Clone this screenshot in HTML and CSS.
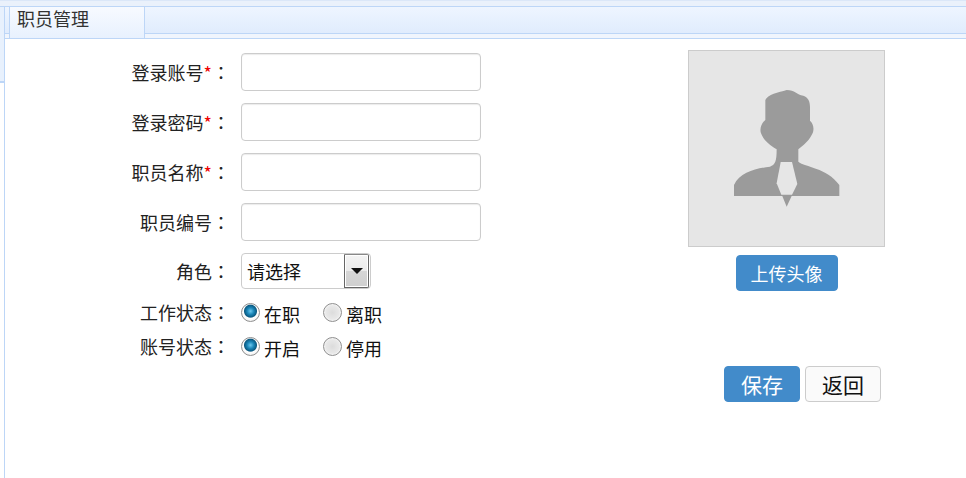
FILE: index.html
```html
<!DOCTYPE html>
<html lang="zh-CN">
<head>
<meta charset="utf-8">
<title>职员管理</title>
<link rel="stylesheet" href="styles.css">
</head>
<body>
<div class="topstrip"></div>
<div class="shell">
  <aside class="rail"><div class="rail-top"></div></aside>
  <main class="main">
    <nav class="tabbar"><div class="tab">职员管理</div></nav>
    <div class="content">
      <form class="form">
        <div class="row row-input"><label class="label">登录账号<em class="req">*</em><span class="colon" lang="zh-TW">：</span></label><input class="input" type="text"></div>
        <div class="row row-input"><label class="label">登录密码<em class="req">*</em><span class="colon" lang="zh-TW">：</span></label><input class="input" type="password"></div>
        <div class="row row-input"><label class="label">职员名称<em class="req">*</em><span class="colon" lang="zh-TW">：</span></label><input class="input" type="text"></div>
        <div class="row row-input"><label class="label">职员编号<span class="colon" lang="zh-TW">：</span></label><input class="input" type="text"></div>
        <div class="row row-select"><label class="label">角色<span class="colon" lang="zh-TW">：</span></label>
          <div class="select"><span class="select-text">请选择</span><span class="select-btn"><i class="caret"></i></span></div>
        </div>
        <div class="row row-radio work"><span class="label">工作状态<span class="colon" lang="zh-TW">：</span></span>
          <label class="radio"><input type="radio" name="work" checked><span class="radio-text">在职</span></label>
          <label class="radio"><input type="radio" name="work"><span class="radio-text">离职</span></label>
        </div>
        <div class="row row-radio acct"><span class="label">账号状态<span class="colon" lang="zh-TW">：</span></span>
          <label class="radio"><input type="radio" name="acct" checked><span class="radio-text">开启</span></label>
          <label class="radio"><input type="radio" name="acct"><span class="radio-text">停用</span></label>
        </div>
      </form>
      <section class="side">
        <div class="avatar-col">
          <div class="photo">
            <svg class="silhouette" viewBox="27 33 585 585" aria-hidden="true">
              <path fill="#9b9b9b" d="M256 180C262 164 296 157 320 150C345 150 350 165 370 167C385 172 390 185 390 200L390 242C400 250 405 270 395 285C385 305 370 315 355 328L355 365C375 382 440 382 478 435L478 468L162 468L162 435C180 395 230 385 270 380C285 375 290 365 290 328C270 315 250 300 243 280C238 265 245 248 256 240Z"/>
              <path fill="#e6e6e6" d="M302 366L336 366L352 432L336 464L304 464L290 430Z"/>
              <path fill="#9b9b9b" d="M306 466L336 466L320 500Z"/>
            </svg>
          </div>
          <button class="btn btn-primary btn-upload" type="button">上传头像</button>
        </div>
        <div class="actions">
          <button class="btn btn-primary btn-large" type="button">保存</button>
          <button class="btn btn-default btn-large" type="button">返回</button>
        </div>
      </section>
    </div>
  </main>
</div>
</body>
</html>
```
FILE: styles.css
```css
* { box-sizing: border-box; }
html, body { margin: 0; height: 100%; }
body {
  font-family: "Noto Sans CJK SC", "Liberation Sans", sans-serif;
  font-size: 18px;
  color: #222;
  background: #fff;
  overflow: hidden;
  display: flex;
  flex-direction: column;
}
.topstrip {
  height: 7px;
  flex: none;
  background: #eaf1fb;
  border-top: 1px solid #dbe7f8;
  border-bottom: 1px solid #bdd6f7;
}
.shell { flex: 1; display: flex; min-height: 0; }
.rail {
  width: 5px;
  flex: none;
  border-right: 1px solid #bdd6f7;
}
.rail-top {
  height: 76px;
  background: #e8f1fd;
  border-bottom: 2px solid #bdd6f7;
}
.main { flex: 1; min-width: 0; display: flex; flex-direction: column; }
.tabbar {
  height: 32px;
  flex: none;
  padding-left: 4px;
  background: linear-gradient(#eef5ff, #e0ecfd 26px, #bdd6f7 26px, #bdd6f7 27px, #f0f5fd 27px, #f0f5fd 31px);
  border-bottom: 1px solid #bdd6f7;
  display: flex;
}
.tab {
  width: 136px;
  height: 31px;
  padding-left: 7px;
  line-height: 23px;
  color: #333;
  background: linear-gradient(#f7faff, #e8f1fe);
  border-left: 1px solid #bdd6f7;
  border-right: 1px solid #bdd6f7;
}
.content { flex: 1; display: flex; min-height: 0; }
.form {
  width: 489px;
  flex: none;
  padding-top: 14px;
  display: flex;
  flex-direction: column;
}
.row { display: flex; align-items: center; }
.label {
  width: 236px;
  flex: none;
  text-align: right;
  padding-right: 11px;
  color: #222;
}
.req { font-style: normal; color: #e00; }
.colon { font-family: "Noto Sans CJK TC", sans-serif; }
.row-input { height: 38px; margin-bottom: 12px; }
.input {
  width: 240px;
  height: 38px;
  padding: 0 6px;
  border: 1px solid #ccc;
  border-radius: 4px;
  background: #fff;
  box-shadow: inset 0 1px 1px rgba(0,0,0,.08);
  font: inherit;
}
.row-select { height: 36px; }
.select {
  width: 130px;
  height: 36px;
  border: 1px solid #ccc;
  border-radius: 4px;
  display: flex;
  align-items: center;
  justify-content: space-between;
  padding: 1px;
}
.select-text { padding-left: 4px; line-height: 32px; color: #111; }
.select-btn {
  width: 25px;
  height: 34px;
  border: 1px solid #666;
  border-top-color: #888;
  border-radius: 0 2px 2px 0;
  background: linear-gradient(#f3f3f3, #ebebeb 49%, #d6d6d6 50%, #cfcfcf);
  box-shadow: inset 0 0 0 1px #fff;
  display: flex;
  align-items: center;
  justify-content: center;
}
.caret {
  width: 0;
  height: 0;
  border-left: 6px solid transparent;
  border-right: 6px solid transparent;
  border-top: 6px solid #111;
}
.row-radio { height: 34px; line-height: 34px; }
.work { margin-top: 6px; }
.radio {
  width: 82px;
  flex: none;
  display: flex;
  align-items: center;
  color: #111;
}
.radio-text { margin-left: 4px; position: relative; top: 2px; }
.radio input {
  appearance: none;
  -webkit-appearance: none;
  width: 19px;
  height: 19px;
  margin: 0;
  border-radius: 50%;
  border: 1px solid #8f8f8f;
  background: radial-gradient(circle at 50% 50%, #dcdcdc 0, #e8e8e8 55%, #fff 85%, #eee 100%);
}
.radio input:checked {
  background: radial-gradient(circle at 50% 42%, #6cc8ee 0, #1a86b8 26%, #0b5a82 46%, #fff 54%, #f2f2f2 75%, #ddd 100%);
}
.side {
  flex: none;
  width: 400px;
  padding-top: 11px;
  display: flex;
  flex-direction: column;
}
.avatar-col { width: 197px; margin-left: 194px; display: flex; flex-direction: column; align-items: center; }
.photo {
  width: 197px;
  height: 197px;
  border: 1px solid #ccc;
  background: #e6e6e6;
}
.silhouette { display: block; width: 195px; height: 195px; }
.btn {
  font-family: inherit;
  border-radius: 4px;
  border: 1px solid transparent;
  padding: 0;
  height: 36px;
  cursor: pointer;
  white-space: nowrap;
}
.btn-primary { background: #428bca; border-color: #428bca; color: #fff; }
.btn-default { background: #fafafa; border-color: #ccc; color: #111; }
.btn-upload { width: 102px; margin-top: 8px; font-size: 18px; }
.actions { margin-top: 75px; margin-left: 230px; display: flex; gap: 5px; }
.btn-large { width: 76px; flex: none; font-size: 21px; }
```
